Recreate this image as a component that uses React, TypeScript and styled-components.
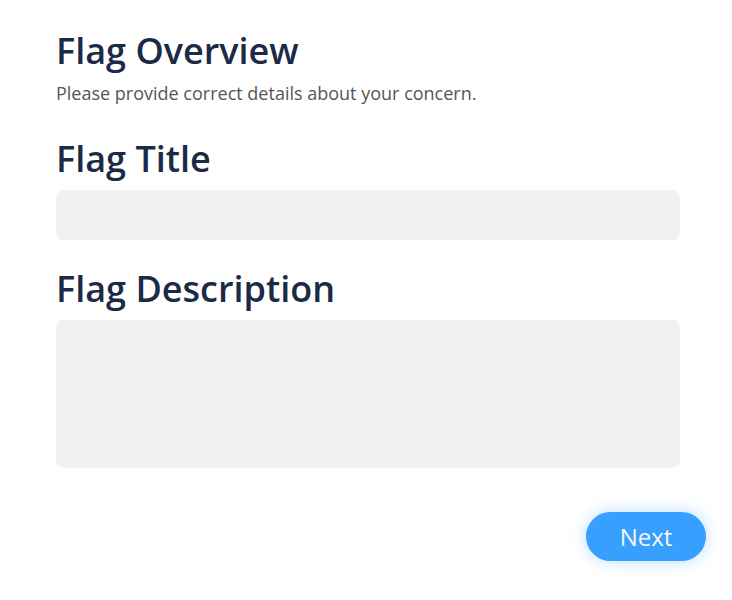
import React from "react";
import styled, { createGlobalStyle } from "styled-components";

const Global = createGlobalStyle`
  body { margin: 0; background: #fff; font-family: "Open Sans", sans-serif; }
  * { box-sizing: border-box; }
`;

const Page = styled.div`
  width: 732px;
  height: 600px;
  padding: 27px 52px 0 56px;
  display: flex;
  flex-direction: column;
`;

const Title = styled.h1`
  margin: 0;
  font-size: 36px;
  font-weight: 600;
  color: #1c2b45;
  line-height: 48px;
`;

const Sub = styled.p`
  margin: 6px 0 0;
  font-size: 18px;
  color: #555;
  line-height: 24px;
`;

const Label = styled.h2<{ $top: number }>`
  margin: ${(p) => p.$top}px 0 0;
  font-size: 36px;
  font-weight: 600;
  color: #1c2b45;
  line-height: 48px;
`;

const Field = styled.div<{ $h: number }>`
  margin-top: 7px;
  height: ${(p) => p.$h}px;
  background: #f1f1f1;
  border-radius: 8px;
`;

const Footer = styled.div`
  display: flex;
  justify-content: flex-end;
  margin-top: 44px;
  margin-right: -26px;
`;

const Button = styled.button`
  width: 120px;
  height: 49px;
  border: none;
  border-radius: 25px;
  background: #379ffe;
  color: #f4f7fb;
  font-family: "Open Sans", sans-serif;
  font-size: 24px;
  font-weight: 500;
  padding: 0;
  box-shadow: 0 0 16px rgba(55, 159, 254, 0.35);
`;

export default function App() {
  return (
    <>
      <Global />
      <Page>
        <Title>Flag Overview</Title>
        <Sub>Please provide correct details about your concern.</Sub>
        <Label $top={30}>Flag Title</Label>
        <Field $h={50} />
        <Label $top={25}>Flag Description</Label>
        <Field $h={148} />
        <Footer>
          <Button>Next</Button>
        </Footer>
      </Page>
    </>
  );
}
